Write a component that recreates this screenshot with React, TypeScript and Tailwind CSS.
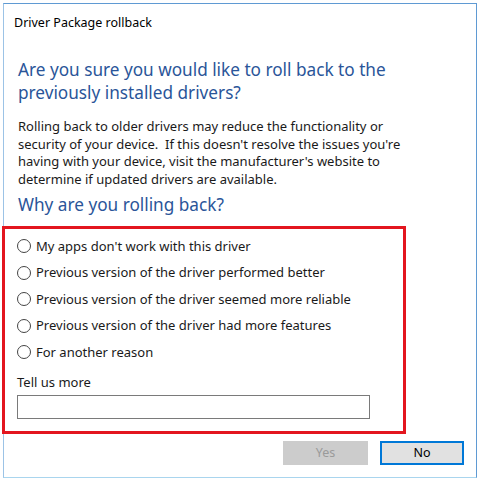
import React from 'react';

const reasons = [
  "My apps don't work with this driver",
  'Previous version of the driver performed better',
  'Previous version of the driver seemed more reliable',
  'Previous version of the driver had more features',
  'For another reason',
];

const Radio: React.FC<{ label: string }> = ({ label }) => (
  <label className="flex items-center h-[26.5px] gap-[5px]">
    <span className="w-[14px] h-[14px] rounded-full border border-[#444444] bg-white shrink-0" />
    <span className="text-[13px] text-[#1a1a1a] leading-none">{label}</span>
  </label>
);

export default function App() {
  return (
    <div className="w-[481px] h-[480px] bg-white pt-[3px] pl-[3px] font-['Noto_Sans',sans-serif]">
      <div className="w-[474px] h-[475px] border border-[#5f9ad3] border-b-[#a9d5ee] border-l-[#9cc3e6] bg-white flex flex-col">
        <div className="pl-[10px] pt-[11px] text-[12.5px] leading-[16px] text-black">
          Driver Package rollback
        </div>

        <h1 className="pl-[14px] mt-[27px] text-[17.2px] leading-[23px] text-[#2a5599] font-normal">
          Are you sure you would like to roll back to the
          <br />
          previously installed drivers?
        </h1>

        <p className="pl-[14px] mt-[14px] text-[13px] leading-[17.5px] text-[#1a1a1a]">
          Rolling back to older drivers may reduce the functionality or
          <br />
          security of your device.&nbsp; If this doesn't resolve the issues you're
          <br />
          having with your device, visit the manufacturer's website to
          <br />
          determine if updated drivers are available.
        </p>

        <h2 className="pl-[14px] mt-[5px] text-[17.2px] leading-[23px] text-[#2a5599] font-normal">
          Why are you rolling back?
        </h2>

        <div className="ml-[-2px] mt-[10px] w-[404px] h-[208px] shrink-0 border-[3px] border-[#e3161f] pl-[12px] pt-[4px]">
          {reasons.map((r) => (
            <Radio key={r} label={r} />
          ))}
          <div className="mt-[8px] text-[13px] leading-[16px] text-[#1a1a1a]">Tell us more</div>
          <div className="mt-[5px] w-[353px] h-[24px] border border-[#7a7a7a] bg-white" />
        </div>

        <div className="flex justify-end gap-[12px] pr-[12px] mt-[7px]">
          <button className="w-[85px] h-[24px] bg-[#cccccc] text-[12.5px] text-[#9a9a9a]">Yes</button>
          <button className="w-[84px] h-[24px] bg-[#e1e1e1] border-2 border-[#0078d7] text-[12.5px] text-black">
            No
          </button>
        </div>
      </div>
    </div>
  );
}
